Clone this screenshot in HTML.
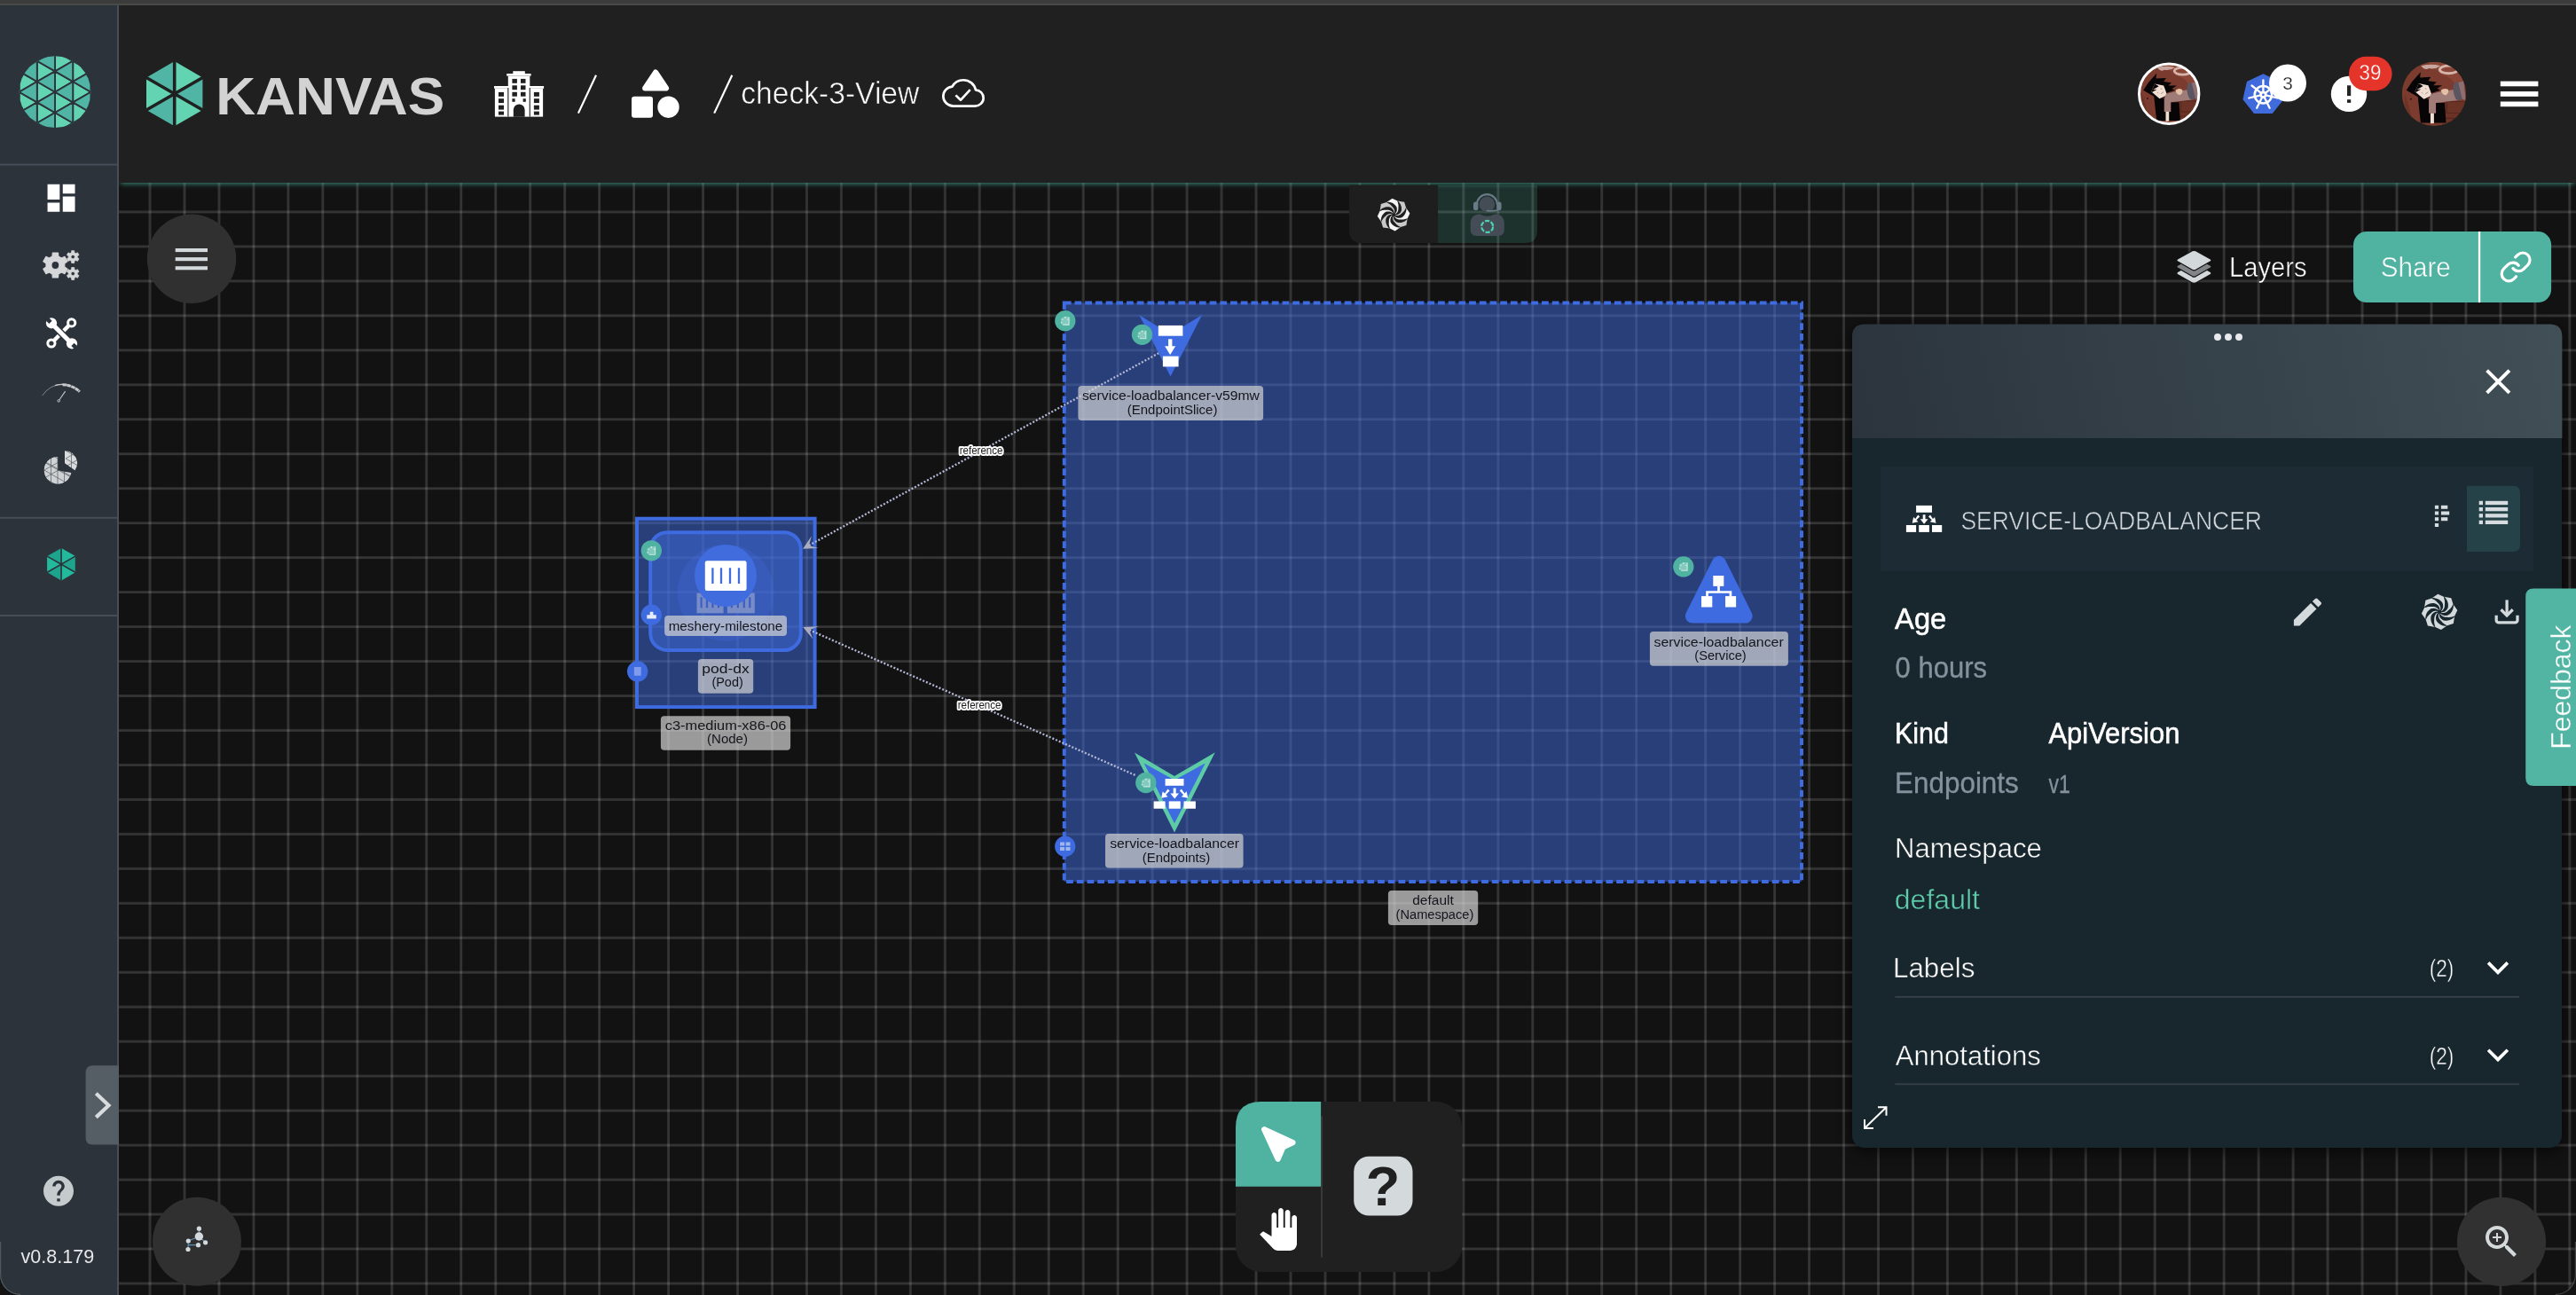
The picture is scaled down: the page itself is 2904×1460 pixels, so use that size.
<!DOCTYPE html>
<html lang="en">
<head>
<meta charset="utf-8">
<title>Kanvas - check-3-View</title>
<style>
*{box-sizing:border-box;margin:0;padding:0}
html,body{width:2904px;height:1460px;overflow:hidden;background:#121212}
body{position:relative;font-family:"Liberation Sans",sans-serif;color:#fff}
.abs{position:absolute}
svg{display:block;overflow:visible;will-change:transform}
#topstrip{left:0;top:0;width:2904px;height:6px;background:linear-gradient(180deg,#3c3c3c 0,#3c3c3c 3.6px,#4a4c4a 4.6px,#474947 6px)}
#grid{left:0;top:0;width:2904px;height:1460px;
 background-image:
  linear-gradient(90deg,rgba(255,255,255,.05) 0,rgba(255,255,255,.148) .75px,rgba(255,255,255,.148) 2.45px,rgba(255,255,255,.05) 3.2px,transparent 3.25px),
  linear-gradient(180deg,rgba(255,255,255,.05) 0,rgba(255,255,255,.148) .75px,rgba(255,255,255,.148) 2.45px,rgba(255,255,255,.05) 3.2px,transparent 3.25px);
 background-size:38.97px 38.97px;
 background-position:167.48px 237.4px;}
#sidebar{left:0;top:6px;width:134px;height:1454px;background:#2c333b;border-right:2px solid #464f58}
#header{left:134px;top:6px;width:2770px;height:199.5px;background:#202020;box-shadow:0 3px 6px -2px rgba(75,175,155,.8)}
.t{position:absolute;white-space:nowrap;line-height:1}
.sx{display:inline-block;transform-origin:0 50%}
</style>
</head>
<body>
<div id="grid" class="abs"></div>
<svg id="cy" class="abs" style="left:0;top:0" width="2904" height="1460" viewBox="0 0 2904 1460" font-family="Liberation Sans, sans-serif">
<defs>
 <g id="bdg"><circle r="11.650" fill="#50b2a1"/><path d="M-4.700,-2.600 L-0.200,-4.900 L4.600,-4.800 L4.600,4.700 L-3,4.700 L-5,2.200 Z" fill="#fff" opacity=".3"/><path d="M4.300,-4.300 V4.400 H-2.600" fill="none" stroke="#fff" stroke-width="1.100" opacity=".6"/><g fill="#fff" opacity=".6"><circle cx="0" cy="-3.800" r=".9"/><circle cx="-2.900" cy="-1.500" r=".8"/><circle cx="-4.100" cy="2.200" r=".8"/><circle cx="3" cy="-1.600" r=".8"/></g></g>
</defs>
<!-- namespace compound -->
<rect x="1199.8" y="341.4" width="831.2" height="652.6" fill="rgba(63,107,224,.5)" stroke="#3f6be0" stroke-width="4" stroke-dasharray="7.8 3.9"/>
<!-- node compound -->
<rect x="718" y="584.7" width="200.6" height="212.4" fill="rgba(63,107,224,.5)" stroke="#3f6be0" stroke-width="4"/>
<!-- pod compound -->
<rect x="733.2" y="600.2" width="169.6" height="132.8" rx="19" fill="rgba(63,107,224,.5)" stroke="#3f6be0" stroke-width="4"/>
<circle cx="818.200" cy="668.300" r="54.400" fill="rgba(75,120,240,.2)"/>
<!-- faint container ghosts -->
<g fill="#788cc8"><rect x="785.500" y="668.600" width="30.100" height="22.700"/><rect x="819.800" y="668.600" width="31" height="22.700"/></g>
<path d="M790.600,673.200v12.100M797,673.200v12.100M803.400,673.200v12.100M810,673.200v12.100M824.900,673.200v12.100M831.800,673.200v12.100M838.800,673.200v12.100M845.300,673.200v12.100" stroke="#3d5fbf" stroke-width="2.200" fill="none"/>
<circle cx="818" cy="648.900" r="35" fill="#406cde"/>
<rect x="794.800" y="632.300" width="46.800" height="33.700" rx="2.200" fill="#fff"/>
<path d="M803.400,640.300v17.600M813,640.300v17.600M823,640.300v17.600M833,640.300v17.600" stroke="#406cde" stroke-width="2.300"/>
<!-- edges -->
<g fill="none" stroke="#b3b8d6" stroke-width="2.300" stroke-dasharray="2 2">
 <path d="M911.9,614.9 L1306.5,398"/>
 <path d="M912.4,710.2 L1281.4,874.7"/>
</g>
<polygon points="905.1,618.7 922.5,618.0 911.9,614.9 915.0,604.3" fill="#aaacc0"/>
<polygon points="905.3,707.0 916.4,720.5 912.4,710.2 922.7,706.2" fill="#aaacc0"/>
<!-- EndpointSlice node -->
<polygon points="1284.200,355.100 1319.500,377 1355.100,355.100 1319.500,424.600" fill="#3f6be0"/>
<rect x="1305.800" y="366.900" width="27.600" height="11.800" fill="#fff"/>
<path d="M1317.100,382.200h4.300v8h3.800l-6.050,9.700l-6.050,-9.700h4z" fill="#fff"/>
<rect x="1310.900" y="401.600" width="17.700" height="11.800" fill="#fff"/>
<!-- Endpoints node (selected) -->
<polygon points="1279,848.500 1323.900,874.900 1369.800,848.300 1324,938.400" fill="#5ccba6"/>
<polygon points="1289.700,860.600 1324,879.500 1358.700,860.600 1324,928.200" fill="#3f6be0"/>
<g fill="#fff">
 <rect x="1313.6" y="878" width="20.900" height="7.800"/>
 <rect x="1300.6" y="903.400" width="13" height="8.300"/><rect x="1317.7" y="903.400" width="13.100" height="8.300"/><rect x="1334.5" y="903.400" width="13.400" height="8.300"/>
 <path d="M1322.700,888.500h3v6h3.300l-4.800,6l-4.800,-6h3.300z"/>
 <path d="M1316.500,889.500l2.100,2.100l-4.300,4.300l2.300,2.300l-7.400,1.500l1.500,-7.400l2.300,2.300z"/>
 <path d="M1331.900,889.500l-2.100,2.100l4.300,4.300l-2.300,2.300l7.400,1.500l-1.500,-7.400l-2.300,2.300z"/>
</g>
<!-- Service node -->
<polygon points="1937.800,634.800 1967.600,694.500 1907.900,694.500" fill="#3f6be0" stroke="#3f6be0" stroke-width="16" stroke-linejoin="round"/>
<g fill="#fff"><rect x="1931.300" y="649" width="12" height="11.900"/><rect x="1918" y="672.100" width="12.300" height="12.400"/><rect x="1945" y="672.100" width="12.100" height="12.400"/></g>
<path d="M1937.500,660.900V667.500M1924.500,672.500V667.500H1950.900V672.500" fill="none" stroke="#fff" stroke-width="2.700"/>
<!-- badges -->
<use href="#bdg" x="1200.8" y="361.7"/>
<use href="#bdg" x="1287.5" y="377.3"/>
<use href="#bdg" x="1897.8" y="638.9"/>
<use href="#bdg" x="1291.8" y="882.5"/>
<use href="#bdg" x="734.3" y="620.8"/>
<circle cx="734.3" cy="693.2" r="11.600" fill="#3f6be0"/>
<path d="M729.300,697.500h10.500v-4.200h-3.400v-3.600h-3.700v3.600h-3.400z" fill="#e8edfb"/>
<circle cx="718.7" cy="757" r="11.700" fill="#3f6be0"/>
<rect x="714.900" y="752" width="7.800" height="9.800" fill="#7f9bea"/>
<circle cx="1200.7" cy="954.2" r="11.600" fill="#3f6be0"/>
<path d="M1195,949.600h5v4h-5zM1201.500,949.600h5v4h-5zM1195,955h5v4h-5zM1201.500,955h5v4h-5z" fill="#9fb5f0"/>
<!-- labels -->
<g fill="rgba(215,215,215,.695)">
 <rect x="1215.4" y="434.9" width="208.7" height="39" rx="4"/>
 <rect x="1859.9" y="711.9" width="156" height="38.900" rx="4"/>
 <rect x="1246" y="940.1" width="155.600" height="38.300" rx="4"/>
 <rect x="749.1" y="694" width="137.900" height="23.100" rx="4"/>
 <rect x="786.9" y="743" width="62.300" height="38.800" rx="4"/>
 <rect x="744.9" y="807.3" width="146.200" height="38.400" rx="4"/>
 <rect x="1564.9" y="1003.9" width="101.300" height="39" rx="4"/>
</g>
<g fill="#15151c" font-size="14" lengthAdjust="spacingAndGlyphs">
 <text x="1220" y="451.2" textLength="199.900" lengthAdjust="spacingAndGlyphs">service-loadbalancer-v59mw</text>
 <text x="1270.8" y="466.6" textLength="101.600" lengthAdjust="spacingAndGlyphs">(EndpointSlice)</text>
 <text x="1864.5" y="728.5" textLength="146.200" lengthAdjust="spacingAndGlyphs">service-loadbalancer</text>
 <text x="1910.3" y="743.8" textLength="58.400" lengthAdjust="spacingAndGlyphs">(Service)</text>
 <text x="1251.2" y="956.2" textLength="145.800" lengthAdjust="spacingAndGlyphs">service-loadbalancer</text>
 <text x="1287.7" y="971.6" textLength="76.500" lengthAdjust="spacingAndGlyphs">(Endpoints)</text>
 <text x="753.7" y="710.6" textLength="128.600" lengthAdjust="spacingAndGlyphs">meshery-milestone</text>
 <text x="791.3" y="759.3" textLength="53.500" lengthAdjust="spacingAndGlyphs">pod-dx</text>
 <text x="802.4" y="774.3" textLength="35.400" lengthAdjust="spacingAndGlyphs">(Pod)</text>
 <text x="749.8" y="823" textLength="136.700" lengthAdjust="spacingAndGlyphs">c3-medium-x86-06</text>
 <text x="797" y="838" textLength="46" lengthAdjust="spacingAndGlyphs">(Node)</text>
 <text x="1592.2" y="1020.4" textLength="46.600" lengthAdjust="spacingAndGlyphs">default</text>
 <text x="1573.6" y="1035.7" textLength="87.700" lengthAdjust="spacingAndGlyphs">(Namespace)</text>
</g>
<g font-size="12.600" fill="#1a1a1a" stroke="#fff" stroke-width="4" stroke-linejoin="round" paint-order="stroke" text-anchor="middle">
 <text x="1106.100" y="511.600" textLength="48.900" lengthAdjust="spacingAndGlyphs">reference</text>
 <text x="1104.100" y="799.100" textLength="48.900" lengthAdjust="spacingAndGlyphs">reference</text>
</g>
</svg>
<div id="header" class="abs"></div>
<svg class="abs" style="left:0;top:0" width="2904" height="206" viewBox="0 0 2904 206" font-family="Liberation Sans, sans-serif">
<defs>
 <clipPath id="avc"><circle cx="50" cy="50" r="50"/></clipPath>
 <g id="avatar" clip-path="url(#avc)">
  <rect width="100" height="100" fill="#7b3c2f"/>
  <path d="M62,20 Q80,24 84,38 L100,40 L100,0 L40,0 Z" fill="#8a4636"/>
  <path d="M30,6 Q45,2 60,6 Q52,12 42,10 Q36,14 30,6Z" fill="#c9a7a0"/>
  <ellipse cx="73" cy="12" rx="14" ry="6" fill="none" stroke="#d6b4ac" stroke-width="4"/>
  <path d="M64,62 H100 V100 H66 Z" fill="#6b3226"/>
  <path d="M64,62 H100 M70,62 V80 M70,80 H100 M66,88 H100" stroke="#57271d" stroke-width="1.500" fill="none"/>
  <path d="M4,50 Q10,62 18,100 H4 Z" fill="#6d3327"/>
  <circle cx="14" cy="58" r="1.600" fill="#3a1812"/>
  <path d="M6.900,44.300 L15.300,31.500 L29.200,15.800 L28.200,24.600 L45,23.600 L41,29.600 L54,31.500 L49,36.500 L62.900,36.500 L55,41.400 L59.900,44.300 L47,48.300 L47,52 L36,60 L24.300,54.200 Z" fill="#070506"/>
  <path d="M24.300,49.300 L29.200,95 L68.800,95 L66.800,64 L53,64 L53,80 L42,80 L42,58 L34,58 Z" fill="#070506"/>
  <path d="M26.200,33.500 L41.100,36.500 L47,52.200 L34.200,58.100 L20.300,46.300 Z" fill="#f1ded3"/>
  <path d="M20.300,46.300 L26.200,33.500 L33,37.500 L23,43.500 L30,42.500 L21.500,47.300 Z" fill="#070506"/>
  <path d="M36,41.500 l2.500,.6 M30.500,47.500 l1.800,1.800 M36.500,50 l4.500,-3" stroke="#8a7a78" stroke-width="1" fill="none"/>
  <path d="M42,60 L45,50 L62,46 L84,43 L88,60 L53,64 L53,80 L42,80 Z" fill="#a07c79"/>
  <path d="M61,44 Q66,40 72,43 Q74,48 69,52 Q62,52 61,44Z" fill="#e2bfa5"/>
  <path d="M81,34 Q86,30 90,32 L94,58 Q88,62 84,58 Q78,46 81,34Z" fill="#5a5560"/>
  <path d="M88,32 L96,30 L100,60 L94,58 Z" fill="#8d6f70"/>
  <rect x="44.500" y="80" width="5.500" height="16" fill="#f1ded3"/>
 </g>
</defs>
<!-- kanvas hex logo -->
<g transform="translate(196.700,105.700)">
 <path d="M0,0L0,-36.600L31.700,-18.300ZM0,0L31.700,18.300L0,36.600ZM0,0L-31.700,18.300L-31.700,-18.300Z" fill="#62d4b2"/>
 <path d="M0,0L31.700,-18.300L31.700,18.300ZM0,0L0,36.600L-31.700,18.300ZM0,0L-31.700,-18.300L0,-36.600Z" fill="#50b5a4"/>
 <path d="M0,-38V38M-33,-19L33,19M-33,19L33,-19" stroke="#202020" stroke-width="3.600"/>
</g>
<text x="243.200" y="129.300" font-size="59" font-weight="700" fill="#d3d3d3" textLength="258" lengthAdjust="spacingAndGlyphs">KANVAS</text>
<!-- building icon -->
<g fill="#fff">
 <rect x="578.300" y="80.200" width="13.500" height="2.800"/>
 <rect x="571.200" y="83" width="27.400" height="2.600"/>
 <rect x="572.800" y="85.600" width="24.500" height="46"/>
 <rect x="557" y="97" width="16.400" height="2.800"/>
 <rect x="557.900" y="99.800" width="15" height="31.800"/>
 <rect x="596.700" y="97" width="16.400" height="2.800"/>
 <rect x="597.200" y="99.800" width="14.900" height="31.800"/>
</g>
<g fill="#202020">
 <rect x="577.400" y="88.900" width="5.500" height="4.900"/><rect x="587" y="88.900" width="5.500" height="4.900"/>
 <rect x="577.400" y="96.300" width="5.500" height="4.900"/><rect x="587" y="96.300" width="5.500" height="4.900"/>
 <rect x="577.400" y="103.800" width="5.500" height="4.900"/><rect x="587" y="103.800" width="5.500" height="4.900"/>
 <rect x="577.400" y="111.200" width="3.200" height="3.600"/><rect x="589.600" y="111.200" width="3.200" height="3.600"/>
 <path d="M578.800,131.700 V123.800 A6.400,6.400 0 0 1 591.600,123.800 V131.700 Z"/>
 <rect x="562" y="103.900" width="6" height="4.900"/><rect x="562" y="111.200" width="6" height="4.900"/><rect x="562" y="118.700" width="6" height="4.900"/><rect x="562" y="125.600" width="6" height="4"/>
 <rect x="601.900" y="103.900" width="6" height="4.900"/><rect x="601.900" y="111.200" width="6" height="4.900"/><rect x="601.900" y="118.700" width="6" height="4.900"/><rect x="601.900" y="125.600" width="6" height="4"/>
 <rect x="572.300" y="99" width="1.100" height="32.600"/><rect x="596.700" y="99" width="1.100" height="32.600"/>
</g>
<path d="M651.900,127.600 L672,84.800 M805.200,127.600 L825.300,84.800" stroke="#fff" stroke-width="2.200" fill="none"/>
<!-- shapes icon -->
<g fill="#fff" stroke="#fff" stroke-linejoin="round">
 <path d="M739.100,81.500 L751.100,99.500 L727.100,99.500 Z" stroke-width="6"/>
 <rect x="715" y="111.800" width="18" height="18" stroke-width="6"/>
 <circle cx="753.500" cy="120.700" r="12.200" stroke="none"/>
</g>
<text x="835.300" y="116.900" font-size="34.700" fill="#fff" stroke="#202020" stroke-width=".55" textLength="201" lengthAdjust="spacingAndGlyphs">check-3-View</text>
<!-- cloud done -->
<g fill="none" stroke="#fff" stroke-width="2.700" stroke-linejoin="round">
 <path transform="translate(1062,80.900) scale(2) translate(12,12) scale(.944,.916) translate(-12,-12)" vector-effect="non-scaling-stroke" d="M19.350 10.040C18.670 6.590 15.640 4 12 4 9.110 4 6.600 5.640 5.350 8.040 2.340 8.360 0 10.910 0 14c0 3.310 2.690 6 6 6h13c2.760 0 5-2.240 5-5 0-2.640-2.050-4.780-4.650-4.960z"/>
 <path d="M1077.400,107.400 L1082.900,112.800 L1093.700,101.100"/>
</g>
<!-- avatar 1 -->
<use href="#avatar" transform="translate(2411.500,72) scale(.674)"/>
<circle cx="2445.200" cy="105.700" r="33.700" fill="none" stroke="#fff" stroke-width="3"/>
<!-- k8s -->
<g transform="translate(2551.400,106.800)">
 <polygon points="0,-22.400 17.500,-14 21.800,5 9.700,20.200 -9.700,20.200 -21.800,5 -17.500,-14" fill="#3f6bdc" stroke="#3f6bdc" stroke-width="2.200" stroke-linejoin="round"/>
 <g stroke="#fff" fill="none" stroke-linecap="round">
  <circle r="9.700" stroke-width="2.500"/>
  <path d="M0,-16.500V-4M12.900,-10.300L3.100,-2.500M16.100,3.700L3.900,.9M7.200,14.900L1.700,3.600M-7.200,14.900L-1.700,3.600M-16.100,3.700L-3.900,.9M-12.900,-10.300L-3.100,-2.500" stroke-width="2.300"/>
 </g>
 <circle r="4.200" fill="#fff"/><circle r="1.400" fill="#3f6bdc"/>
</g>
<circle cx="2579" cy="93.500" r="21" fill="#fff"/>
<text x="2579" y="101.100" font-size="20.800" fill="#1a1a1a" stroke="#fff" stroke-width=".25" text-anchor="middle">3</text>
<!-- alerts -->
<circle cx="2648" cy="105.900" r="20.200" fill="#fff"/>
<rect x="2646" y="96.300" width="4.200" height="11.800" fill="#252525"/><rect x="2646" y="112.200" width="4.200" height="3.700" fill="#252525"/>
<rect x="2648" y="63.800" width="48.600" height="38.500" rx="19.250" fill="#e5342a"/>
<text x="2672" y="90" font-size="23" fill="#fff" stroke="#e5342a" stroke-width=".3" text-anchor="middle" textLength="24.800" lengthAdjust="spacingAndGlyphs">39</text>
<!-- avatar 2 -->
<use href="#avatar" transform="translate(2707.800,69.800) scale(.722)"/>
<!-- hamburger -->
<g fill="#fff"><rect x="2818.800" y="91.600" width="42.600" height="5.700"/><rect x="2818.800" y="103.100" width="42.600" height="5.700"/><rect x="2818.800" y="114.500" width="42.600" height="5.700"/></g>
</svg>
<div id="sidebar" class="abs"></div>
<div id="topstrip" class="abs"></div>
<svg class="abs" style="left:0;top:0" width="134" height="1460" viewBox="0 0 134 1460" font-family="Liberation Sans, sans-serif">
<defs><clipPath id="mclip"><circle cx="0" cy="0" r="40.4"/></clipPath></defs>
<!-- meshery logo -->
<g transform="translate(62,103.700)" clip-path="url(#mclip)">
 <rect x="-45" y="-45" width="90" height="90" fill="#2c333b"/>
 <path d="M-60.6,-11.7 -60.6,11.7 -40.4,0.0zM-40.4,-46.6 -40.4,-23.3 -20.2,-35.0zM-40.4,-23.3 -40.4,0.0 -20.2,-11.7zM-40.4,0.0 -40.4,23.3 -20.2,11.7zM-40.4,23.3 -40.4,46.6 -20.2,35.0zM-20.2,-58.3 -20.2,-35.0 0.0,-46.6zM-20.2,-35.0 -20.2,-11.7 0.0,-23.3zM-20.2,-11.7 -20.2,11.7 0.0,0.0zM-20.2,11.7 -20.2,35.0 0.0,23.3zM-20.2,35.0 -20.2,58.3 0.0,46.6zM0.0,-46.6 0.0,-23.3 20.2,-35.0zM0.0,-23.3 0.0,0.0 20.2,-11.7zM0.0,0.0 0.0,23.3 20.2,11.7zM0.0,23.3 0.0,46.6 20.2,35.0zM20.2,-58.3 20.2,-35.0 40.4,-46.6zM20.2,-35.0 20.2,-11.7 40.4,-23.3zM20.2,-11.7 20.2,11.7 40.4,0.0zM20.2,11.7 20.2,35.0 40.4,23.3zM20.2,35.0 20.2,58.3 40.4,46.6zM40.4,-23.3 40.4,0.0 60.6,-11.7zM40.4,0.0 40.4,23.3 60.6,11.7z" fill="#62d4b2" stroke="#2c333b" stroke-width="1.9" stroke-linejoin="miter"/>
 <path d="M-40.4,-23.3 -40.4,0.0 -60.6,-11.7zM-40.4,0.0 -40.4,23.3 -60.6,11.7zM-20.2,-58.3 -20.2,-35.0 -40.4,-46.6zM-20.2,-35.0 -20.2,-11.7 -40.4,-23.3zM-20.2,-11.7 -20.2,11.7 -40.4,0.0zM-20.2,11.7 -20.2,35.0 -40.4,23.3zM-20.2,35.0 -20.2,58.3 -40.4,46.6zM0.0,-46.6 0.0,-23.3 -20.2,-35.0zM0.0,-23.3 0.0,0.0 -20.2,-11.7zM0.0,0.0 0.0,23.3 -20.2,11.7zM0.0,23.3 0.0,46.6 -20.2,35.0zM20.2,-58.3 20.2,-35.0 0.0,-46.6zM20.2,-35.0 20.2,-11.7 0.0,-23.3zM20.2,-11.7 20.2,11.7 0.0,0.0zM20.2,11.7 20.2,35.0 0.0,23.3zM20.2,35.0 20.2,58.3 0.0,46.6zM40.4,-46.6 40.4,-23.3 20.2,-35.0zM40.4,-23.3 40.4,0.0 20.2,-11.7zM40.4,0.0 40.4,23.3 20.2,11.7zM40.4,23.3 40.4,46.6 20.2,35.0zM60.6,-11.7 60.6,11.7 40.4,0.0z" fill="#50b5a4" stroke="#2c333b" stroke-width="1.9" stroke-linejoin="miter"/>
</g>
<!-- dividers -->
<rect x="0" y="184.600" width="132" height="2" fill="#454d56"/>
<rect x="0" y="582.800" width="132" height="2" fill="#454d56"/>
<rect x="0" y="693" width="132" height="2" fill="#454d56"/>
<!-- dashboard -->
<path transform="translate(48.400,202.700) scale(1.720)" d="M3 13h8V3H3v10zm0 8h8v-6H3v6zm10 0h8V11h-8v10zm0-18v6h8V3h-8z" fill="#fff"/>
<!-- gears -->
<g fill="#d5d7d9" fill-rule="evenodd" stroke="#d5d7d9" stroke-width="1.200" stroke-linejoin="round">
 <path transform="translate(62.400,299)" d="M3.4,10.0 L3.1,13.9 L-3.1,13.9 L-3.4,10.0 L-7.0,8.0 L-10.5,9.6 L-13.6,4.2 L-10.4,2.1 L-10.4,-2.1 L-13.6,-4.2 L-10.5,-9.6 L-7.0,-8.0 L-3.4,-10.0 L-3.1,-13.9 L3.1,-13.9 L3.4,-10.0 L7.0,-8.0 L10.5,-9.6 L13.6,-4.2 L10.4,-2.1 L10.4,2.1 L13.6,4.2 L10.5,9.6 L7.0,8.0Z M4.5,0 A4.5,4.5 0 1,0 -4.5,0 A4.5,4.5 0 1,0 4.5,0Z"/>
 <path transform="translate(82.200,289.600)" d="M1.6,4.8 L1.5,6.9 L-1.5,6.9 L-1.6,4.8 L-3.4,3.8 L-5.2,4.8 L-6.8,2.1 L-5.0,1.0 L-5.0,-1.0 L-6.8,-2.1 L-5.2,-4.8 L-3.4,-3.8 L-1.6,-4.8 L-1.5,-6.9 L1.5,-6.9 L1.6,-4.8 L3.4,-3.8 L5.2,-4.8 L6.8,-2.1 L5.0,-1.0 L5.0,1.0 L6.8,2.1 L5.2,4.8 L3.4,3.8Z M2.2,0 A2.2,2.2 0 1,0 -2.2,0 A2.2,2.2 0 1,0 2.2,0Z" stroke-width=".8"/>
 <path transform="translate(82.200,308.500)" d="M1.6,4.8 L1.5,6.9 L-1.5,6.9 L-1.6,4.8 L-3.4,3.8 L-5.2,4.8 L-6.8,2.1 L-5.0,1.0 L-5.0,-1.0 L-6.8,-2.1 L-5.2,-4.8 L-3.4,-3.8 L-1.6,-4.8 L-1.5,-6.9 L1.5,-6.9 L1.6,-4.8 L3.4,-3.8 L5.2,-4.8 L6.8,-2.1 L5.0,-1.0 L5.0,1.0 L6.8,2.1 L5.2,4.8 L3.4,3.8Z M2.2,0 A2.2,2.2 0 1,0 -2.2,0 A2.2,2.2 0 1,0 2.2,0Z" stroke-width=".8"/>
</g>
<!-- tools -->
<g>
 <path d="M57.900,387 L80.700,363.900" stroke="#fff" stroke-width="4.400" stroke-linecap="round"/>
 <circle cx="80.700" cy="363.900" r="4.100" fill="#2c333b" stroke="#fff" stroke-width="3"/>
 <circle cx="57.900" cy="387" r="4.100" fill="#2c333b" stroke="#fff" stroke-width="3"/>
 <path d="M59,365.500 L80,386.500" stroke="#2c333b" stroke-width="8"/>
 <path d="M58.500,365 L80.500,387" stroke="#fff" stroke-width="5.200"/>
 <circle cx="58" cy="364.300" r="6.100" fill="#fff"/><circle cx="81" cy="387.300" r="6.100" fill="#fff"/>
 <path d="M57,363.300 L50,356.300" stroke="#2c333b" stroke-width="4.600"/>
 <path d="M82,388.300 L89,395.300" stroke="#2c333b" stroke-width="4.600"/>
</g>
<!-- gauge -->
<g fill="none" stroke="#c8cacc">
 <path d="M47.800,445.900 A28.500,28.500 0 0 1 70.500,433.200" stroke-width=".8" opacity=".7"/>
 <path d="M62,434.600 A28.500,28.500 0 0 1 76,433.900" stroke-width="1.400"/>
 <path d="M70.500,433.700 A28,28 0 0 1 89.800,441.600" stroke-width="3" stroke-dasharray="4.500 .5"/>
 <path d="M66.900,450.700 L73.600,441.100" stroke-width="1.100"/>
 <circle cx="66.200" cy="451.900" r="1.300" stroke-width=".9"/>
</g>
<!-- pie -->
<g>
 <path d="M65.100,530.300 L65.100,514.900 A15.400,15.400 0 1 0 80.300,533 Z" fill="#cfd2d4"/>
 <circle cx="74" cy="522" r="9.500" fill="#2c333b"/>
 <path d="M65.100,530.300 L65.100,514.900 A15.400,15.400 0 0 0 49.700,530.300 Z" fill="#cfd2d4"/>
 <path d="M73,522.200 L73,508.200 A14,14 0 0 1 84.500,530.200 Z" fill="#d9dbdd"/>
 <g stroke="#2c333b" stroke-width=".7" opacity=".75"><path d="M57.500,512v36M65,512v36M72.500,528v20M80.500,505v26M48,520l32,18M48,529l28,16M48,538l18,10M60,514l8,4.500M82,538l-34,-19M66,548l14,-8M48,540l18,-10M48,531l18,-10M74,517l16,-9M74,526l16,-9M74,508l16,9M74,517l14,8"/></g>
</g>
<!-- kanvas hex -->
<g transform="translate(69,636.200)">
 <polygon points="0,-18.200 15.800,-9.100 15.800,9.100 0,18.200 -15.800,9.100 -15.800,-9.100" fill="#1ca58c"/>
 <path d="M0,0L0,-18.200L15.800,-9.100ZM0,0L15.800,9.100L0,18.200ZM0,0L-15.800,9.100L-15.800,-9.100Z" fill="#22b99d"/>
 <path d="M0,-18.200V18.200M-15.800,-9.100L15.800,9.100M-15.800,9.100L15.800,-9.100" stroke="#2c333b" stroke-width="1.600"/>
</g>
<!-- expand tab -->
<path d="M134,1201.200 H104.600 Q96.600,1201.200 96.600,1209.200 V1282.400 Q96.600,1290.400 104.600,1290.400 H134 Z" fill="#555d65"/>
<path d="M108.300,1232.800 L122.500,1246.200 L108.300,1259.600" fill="none" stroke="#d9dcde" stroke-width="4.200"/>
<!-- help -->
<path transform="translate(45.600,1322.300) scale(1.700)" d="M12 2C6.480 2 2 6.480 2 12s4.480 10 10 10 10-4.480 10-10S17.520 2 12 2zm1 17h-2v-2h2v2zm2.070-7.750l-.9.920C13.450 12.900 13 13.500 13 15h-2v-.5c0-1.100.450-2.100 1.170-2.830l1.240-1.260c.370-.360.590-.860.590-1.410 0-1.100-.9-2-2-2s-2 .9-2 2H8c0-2.210 1.790-4 4-4s4 1.790 4 4c0 .880-.360 1.680-.930 2.250z" fill="#c5cacd"/>
<text x="23.600" y="1424" font-size="22.800" fill="#e6e8ea" textLength="82.500" lengthAdjust="spacingAndGlyphs">v0.8.179</text>
</svg>
<svg class="abs" style="left:0;top:0" width="2904" height="1460" viewBox="0 0 2904 1460" font-family="Liberation Sans, sans-serif">
<!-- left hamburger fab -->
<circle cx="216" cy="291.800" r="50.200" fill="#303030"/>
<g fill="#d4d9dc"><rect x="197.700" y="280" width="36.300" height="4.100"/><rect x="197.700" y="290.100" width="36.300" height="4.100"/><rect x="197.700" y="300.200" width="36.300" height="4.100"/></g>
<!-- top toolbar -->
<path d="M1521,208.800 H1621 V274 H1535 Q1521,274 1521,260 Z" fill="#1e1e1e"/>
<path d="M1621,208.800 H1733 V260 Q1733,274 1719,274 H1621 Z" fill="rgba(80,190,170,.185)"/>
<!--SP1-->
<polygon points="1571.1,242.1 1571.7,241.3 1572.3,240.5 1572.7,239.5 1572.9,238.5 1573.0,237.4 1572.9,236.3 1572.6,235.2 1572.2,234.2 1571.6,233.1 1570.8,232.1 1569.9,231.1 1568.8,230.3 1567.6,229.5 1566.3,228.9 1564.8,228.5 1563.2,228.1 1569.5,223.8 1575.4,226.6 1576.3,228.0 1577.0,229.4 1577.5,230.7 1577.9,232.1 1578.0,233.5 1578.0,234.8 1577.8,236.1 1577.5,237.2 1577.0,238.3 1576.4,239.3 1575.7,240.1 1574.9,240.8 1574.0,241.4 1573.1,241.8 1572.1,242.0 1571.1,242.1" fill="#f4f4f4"/>
<polygon points="1571.1,242.1 1572.1,242.0 1573.1,241.8 1574.0,241.4 1574.9,240.8 1575.7,240.1 1576.4,239.3 1577.0,238.3 1577.5,237.2 1577.8,236.1 1578.0,234.8 1578.0,233.5 1577.9,232.1 1577.5,230.7 1577.0,229.4 1576.3,228.0 1575.4,226.6 1583.1,227.8 1585.1,234.2 1584.7,235.8 1584.3,237.3 1583.7,238.6 1582.9,239.8 1582.1,240.9 1581.1,241.8 1580.1,242.6 1579.0,243.2 1578.0,243.6 1576.9,243.9 1575.8,244.0 1574.7,243.9 1573.7,243.7 1572.7,243.3 1571.9,242.7 1571.1,242.1" fill="#c9c9c9"/>
<polygon points="1571.1,242.1 1571.9,242.7 1572.7,243.3 1573.7,243.7 1574.7,243.9 1575.8,244.0 1576.9,243.9 1578.0,243.6 1579.0,243.2 1580.1,242.6 1581.1,241.8 1582.1,240.9 1582.9,239.8 1583.7,238.6 1584.3,237.3 1584.7,235.8 1585.1,234.2 1589.4,240.5 1586.6,246.4 1585.2,247.3 1583.8,248.0 1582.5,248.5 1581.1,248.9 1579.7,249.0 1578.4,249.0 1577.1,248.8 1576.0,248.5 1574.9,248.0 1573.9,247.4 1573.1,246.7 1572.4,245.9 1571.8,245.0 1571.4,244.1 1571.2,243.1 1571.1,242.1" fill="#f4f4f4"/>
<polygon points="1571.1,242.1 1571.2,243.1 1571.4,244.1 1571.8,245.0 1572.4,245.9 1573.1,246.7 1573.9,247.4 1574.9,248.0 1576.0,248.5 1577.1,248.8 1578.4,249.0 1579.7,249.0 1581.1,248.9 1582.5,248.5 1583.8,248.0 1585.2,247.3 1586.6,246.4 1585.4,254.1 1579.0,256.1 1577.4,255.7 1575.9,255.3 1574.6,254.7 1573.4,253.9 1572.3,253.1 1571.4,252.1 1570.6,251.1 1570.0,250.0 1569.6,249.0 1569.3,247.9 1569.2,246.8 1569.3,245.7 1569.5,244.7 1569.9,243.7 1570.5,242.9 1571.1,242.1" fill="#c9c9c9"/>
<polygon points="1571.1,242.1 1570.5,242.9 1569.9,243.7 1569.5,244.7 1569.3,245.7 1569.2,246.8 1569.3,247.9 1569.6,249.0 1570.0,250.0 1570.6,251.1 1571.4,252.1 1572.3,253.1 1573.4,253.9 1574.6,254.7 1575.9,255.3 1577.4,255.7 1579.0,256.1 1572.7,260.4 1566.8,257.6 1565.9,256.2 1565.2,254.8 1564.7,253.5 1564.3,252.1 1564.2,250.7 1564.2,249.4 1564.4,248.1 1564.7,247.0 1565.2,245.9 1565.8,244.9 1566.5,244.1 1567.3,243.4 1568.2,242.8 1569.1,242.4 1570.1,242.2 1571.1,242.1" fill="#f4f4f4"/>
<polygon points="1571.1,242.1 1570.1,242.2 1569.1,242.4 1568.2,242.8 1567.3,243.4 1566.5,244.1 1565.8,244.9 1565.2,245.9 1564.7,247.0 1564.4,248.1 1564.2,249.4 1564.2,250.7 1564.3,252.1 1564.7,253.5 1565.2,254.8 1565.9,256.2 1566.8,257.6 1559.1,256.4 1557.1,250.0 1557.5,248.4 1557.9,246.9 1558.5,245.6 1559.3,244.4 1560.1,243.3 1561.1,242.4 1562.1,241.6 1563.2,241.0 1564.2,240.6 1565.3,240.3 1566.4,240.2 1567.5,240.3 1568.5,240.5 1569.5,240.9 1570.3,241.5 1571.1,242.1" fill="#c9c9c9"/>
<polygon points="1571.1,242.1 1570.3,241.5 1569.5,240.9 1568.5,240.5 1567.5,240.3 1566.4,240.2 1565.3,240.3 1564.2,240.6 1563.2,241.0 1562.1,241.6 1561.1,242.4 1560.1,243.3 1559.3,244.4 1558.5,245.6 1557.9,246.9 1557.5,248.4 1557.1,250.0 1552.8,243.7 1555.6,237.8 1557.0,236.9 1558.4,236.2 1559.7,235.7 1561.1,235.3 1562.5,235.2 1563.8,235.2 1565.1,235.4 1566.2,235.7 1567.3,236.2 1568.3,236.8 1569.1,237.5 1569.8,238.3 1570.4,239.2 1570.8,240.1 1571.0,241.1 1571.1,242.1" fill="#f4f4f4"/>
<polygon points="1571.1,242.1 1571.0,241.1 1570.8,240.1 1570.4,239.2 1569.8,238.3 1569.1,237.5 1568.3,236.8 1567.3,236.2 1566.2,235.7 1565.1,235.4 1563.8,235.2 1562.5,235.2 1561.1,235.3 1559.7,235.7 1558.4,236.2 1557.0,236.9 1555.6,237.8 1556.8,230.1 1563.2,228.1 1564.8,228.5 1566.3,228.9 1567.6,229.5 1568.8,230.3 1569.9,231.1 1570.8,232.1 1571.6,233.1 1572.2,234.2 1572.6,235.2 1572.9,236.3 1573.0,237.4 1572.9,238.5 1572.7,239.5 1572.3,240.5 1571.7,241.3 1571.1,242.1" fill="#c9c9c9"/>
<path d="M1572.3,241.8 1573.1,241.4 1573.8,240.9 1574.4,240.3 1575.0,239.7 1575.5,238.9 1575.9,238.0 1576.2,237.1 1576.4,236.1 1576.4,235.1 1576.4,234.1 1576.5,233.1 1576.5,232.2 1576.5,231.2 1576.3,230.2 1576.1,229.2 1575.8,228.2 1575.5,227.2 1575.5,226.3 1575.5,226.3 1577.1,227.8 1578.2,229.2 1579.0,230.7 1579.5,232.2 1579.9,233.7 1580.0,235.1 1580.0,236.5 1579.7,237.8 1579.3,238.8 1578.7,239.7 1578.0,240.4 1577.3,241.1 1576.5,241.6 1575.7,242.0 1574.9,242.3 1574.0,242.5 1573.2,242.5 1572.3,242.4ZM1572.2,242.7 1573.0,243.0 1573.8,243.2 1574.7,243.2 1575.6,243.1 1576.5,242.9 1577.4,242.6 1578.2,242.2 1579.1,241.6 1579.8,240.9 1580.6,240.2 1581.3,239.6 1582.0,238.9 1582.6,238.2 1583.2,237.4 1583.8,236.5 1584.3,235.6 1584.7,234.7 1585.3,234.1 1585.3,234.1 1585.5,236.2 1585.2,238.0 1584.7,239.6 1584.1,241.1 1583.3,242.3 1582.3,243.5 1581.3,244.4 1580.2,245.2 1579.2,245.6 1578.2,245.8 1577.2,245.8 1576.2,245.8 1575.3,245.6 1574.4,245.3 1573.6,244.9 1572.9,244.4 1572.3,243.8 1571.7,243.2ZM1571.4,243.3 1571.8,244.1 1572.3,244.8 1572.9,245.4 1573.5,246.0 1574.3,246.5 1575.2,246.9 1576.1,247.2 1577.1,247.4 1578.1,247.4 1579.1,247.4 1580.1,247.5 1581.0,247.5 1582.0,247.5 1583.0,247.3 1584.0,247.1 1585.0,246.8 1586.0,246.5 1586.9,246.5 1586.9,246.5 1585.4,248.1 1584.0,249.2 1582.5,250.0 1581.0,250.5 1579.5,250.9 1578.1,251.0 1576.7,251.0 1575.4,250.7 1574.4,250.3 1573.5,249.7 1572.8,249.0 1572.1,248.3 1571.6,247.5 1571.2,246.7 1570.9,245.9 1570.7,245.0 1570.7,244.2 1570.8,243.3ZM1570.5,243.2 1570.2,244.0 1570.0,244.8 1570.0,245.7 1570.1,246.6 1570.3,247.5 1570.6,248.4 1571.0,249.2 1571.6,250.1 1572.3,250.8 1573.0,251.6 1573.6,252.3 1574.3,253.0 1575.0,253.6 1575.8,254.2 1576.7,254.8 1577.6,255.3 1578.5,255.7 1579.1,256.3 1579.1,256.3 1577.0,256.5 1575.2,256.2 1573.6,255.7 1572.1,255.1 1570.9,254.3 1569.7,253.3 1568.8,252.3 1568.0,251.2 1567.6,250.2 1567.4,249.2 1567.4,248.2 1567.4,247.2 1567.6,246.3 1567.9,245.4 1568.3,244.6 1568.8,243.9 1569.4,243.3 1570.0,242.7ZM1569.9,242.4 1569.1,242.8 1568.4,243.3 1567.8,243.9 1567.2,244.5 1566.7,245.3 1566.3,246.2 1566.0,247.1 1565.8,248.1 1565.8,249.1 1565.8,250.1 1565.7,251.1 1565.7,252.0 1565.7,253.0 1565.9,254.0 1566.1,255.0 1566.4,256.0 1566.7,257.0 1566.7,257.9 1566.7,257.9 1565.1,256.4 1564.0,255.0 1563.2,253.5 1562.7,252.0 1562.3,250.5 1562.2,249.1 1562.2,247.7 1562.5,246.4 1562.9,245.4 1563.5,244.5 1564.2,243.8 1564.9,243.1 1565.7,242.6 1566.5,242.2 1567.3,241.9 1568.2,241.7 1569.0,241.7 1569.9,241.8ZM1570.0,241.5 1569.2,241.2 1568.4,241.0 1567.5,241.0 1566.6,241.1 1565.7,241.3 1564.8,241.6 1564.0,242.0 1563.1,242.6 1562.4,243.3 1561.6,244.0 1560.9,244.6 1560.2,245.3 1559.6,246.0 1559.0,246.8 1558.4,247.7 1557.9,248.6 1557.5,249.5 1556.9,250.1 1556.9,250.1 1556.7,248.0 1557.0,246.2 1557.5,244.6 1558.1,243.1 1558.9,241.9 1559.9,240.7 1560.9,239.8 1562.0,239.0 1563.0,238.6 1564.0,238.4 1565.0,238.4 1566.0,238.4 1566.9,238.6 1567.8,238.9 1568.6,239.3 1569.3,239.8 1569.9,240.4 1570.5,241.0ZM1570.8,240.9 1570.4,240.1 1569.9,239.4 1569.3,238.8 1568.7,238.2 1567.9,237.7 1567.0,237.3 1566.1,237.0 1565.1,236.8 1564.1,236.8 1563.1,236.8 1562.1,236.7 1561.2,236.7 1560.2,236.7 1559.2,236.9 1558.2,237.1 1557.2,237.4 1556.2,237.7 1555.3,237.7 1555.3,237.7 1556.8,236.1 1558.2,235.0 1559.7,234.2 1561.2,233.7 1562.7,233.3 1564.1,233.2 1565.5,233.2 1566.8,233.5 1567.8,233.9 1568.7,234.5 1569.4,235.2 1570.1,235.9 1570.6,236.7 1571.0,237.5 1571.3,238.3 1571.5,239.2 1571.5,240.0 1571.4,240.9ZM1571.7,241.0 1572.0,240.2 1572.2,239.4 1572.2,238.5 1572.1,237.6 1571.9,236.7 1571.6,235.8 1571.2,235.0 1570.6,234.1 1569.9,233.4 1569.2,232.6 1568.6,231.9 1567.9,231.2 1567.2,230.6 1566.4,230.0 1565.5,229.4 1564.6,228.9 1563.7,228.5 1563.1,227.9 1563.1,227.9 1565.2,227.7 1567.0,228.0 1568.6,228.5 1570.1,229.1 1571.3,229.9 1572.5,230.9 1573.4,231.9 1574.2,233.0 1574.6,234.0 1574.8,235.0 1574.8,236.0 1574.8,237.0 1574.6,237.9 1574.3,238.8 1573.9,239.6 1573.4,240.3 1572.8,240.9 1572.2,241.5Z" fill="#1e1e1e"/>
<rect x="1569.4" y="240.4" width="3.4" height="3.4" fill="#1e1e1e"/>
<!--/SP1-->
<!-- headset person -->
<g>
 <path d="M1665,230.500 A11.400,11.400 0 0 1 1687.800,230.500" fill="none" stroke="#6a7b87" stroke-width="2.200"/>
 <rect x="1661" y="227.500" width="5.400" height="9.600" rx="2.600" fill="#6a7b87"/>
 <rect x="1687.200" y="227.500" width="5.400" height="9.600" rx="2.600" fill="#6a7b87"/>
 <circle cx="1676.400" cy="230.400" r="8.800" fill="#444c55"/>
 <path d="M1689.600,236 Q1688,238.200 1676.500,237.700" fill="none" stroke="#6a7b87" stroke-width="1.800" stroke-linecap="round"/>
 <path d="M1657.700,252 Q1657.700,241.400 1668.500,241.400 Q1676.600,246.200 1685,241.400 Q1695.800,241.400 1695.800,252 V259 Q1695.800,265.900 1689,265.900 H1664.500 Q1657.700,265.900 1657.700,259 Z" fill="#444c55"/>
 <circle cx="1676.600" cy="255.400" r="6.500" fill="none" stroke="#4fd1ae" stroke-width="2.200" stroke-dasharray="5.200 1.600"/>
</g>
<!-- layers -->
<g stroke="#121212" stroke-width="1.200" stroke-linejoin="round">
 <path d="M2473.400,296.300 L2492,306.600 Q2494,308 2492,309.400 L2475.400,318.900 Q2473.400,319.900 2471.400,318.900 L2454.800,309.400 Q2452.800,308 2454.800,306.600 Z" fill="#d3d8db"/>
 <path d="M2473.400,289 L2492,299.300 Q2494,300.700 2492,302.100 L2475.400,311.600 Q2473.400,312.600 2471.400,311.600 L2454.800,302.100 Q2452.800,300.700 2454.800,299.300 Z" fill="#808486"/>
 <path d="M2471.400,282.800 Q2473.400,281.800 2475.400,282.800 L2492,292 Q2494,293.400 2492,294.800 L2475.400,304.300 Q2473.400,305.300 2471.400,304.300 L2454.800,294.800 Q2452.800,293.400 2454.800,292 Z" fill="#d3d8db"/>
</g>
<text x="2513.100" y="311.900" font-size="31" fill="#fff" stroke="#121212" stroke-width=".5" textLength="87.500" lengthAdjust="spacingAndGlyphs">Layers</text>
<!-- share -->
<rect x="2653" y="261" width="223.100" height="80.100" rx="15" fill="#50b2a1"/>
<rect x="2793.900" y="261" width="2.300" height="80.100" fill="#fff"/>
<text x="2683.800" y="312.200" font-size="32" fill="#fff" stroke="#50b2a1" stroke-width=".55" textLength="79" lengthAdjust="spacingAndGlyphs">Share</text>
<g transform="translate(2816.900,281.700) scale(1.600)" fill="none" stroke="#fff" stroke-width="2" stroke-linecap="round" stroke-linejoin="round">
 <path d="M10 13a5 5 0 0 0 7.540.540l3-3a5 5 0 0 0-7.070-7.070l-1.720 1.710"/>
 <path d="M14 11a5 5 0 0 0-7.540-.540l-3 3a5 5 0 0 0 7.070 7.070l1.710-1.710"/>
</g>
<!-- bottom-left fab -->
<circle cx="222" cy="1399.800" r="50" fill="#303030"/>
<g stroke="#5b8fb0" stroke-width="1.200" fill="none"><path d="M224.400,1394 L224.400,1385.500 M224.400,1394 L212.300,1399 M224.400,1394 L231.600,1400.800 M212.300,1399 L212,1408.500 M212.300,1403.700 H223.500"/></g>
<g fill="#d4d9dc"><circle cx="224.400" cy="1394" r="4.700"/><circle cx="224.400" cy="1385.200" r="2.600"/><circle cx="212.300" cy="1399" r="2.600"/><circle cx="231.600" cy="1400.800" r="2.600"/><circle cx="223.500" cy="1403.700" r="2.600"/><circle cx="212" cy="1408.500" r="2.600"/></g>
<!-- bottom toolbar -->
<rect x="1393" y="1242" width="255.100" height="192" rx="29" fill="#202020"/>
<path d="M1393,1337.800 V1271 Q1393,1242 1422,1242 H1489.100 V1337.800 Z" fill="#50b2a1"/>
<rect x="1489.100" y="1258.300" width="1.800" height="159.300" fill="#3c3c3c"/>
<path d="M1425.300,1273.300 L1457.300,1288.100 L1446.400,1293.300 L1440.700,1306.600 Z" fill="#fff" stroke="#fff" stroke-width="6.400" stroke-linejoin="round"/>
<path transform="translate(1418.300,1362) scale(1.900,2)" fill="#fff" d="M23 5.500V20c0 2.200-1.800 4-4 4h-7.300c-1.080 0-2.100-.430-2.850-1.190L1 14.830s1.260-1.230 1.300-1.250c.220-.190.490-.290.790-.290.220 0 .420.060.600.160.040.010 4.310 2.460 4.310 2.460V4c0-.830.670-1.500 1.500-1.500S11 3.170 11 4v7h1V1.500c0-.830.670-1.500 1.500-1.500S15 .670 15 1.500V11h1V2.500c0-.830.670-1.500 1.500-1.500s1.500.670 1.500 1.500V11h1V5.500c0-.830.670-1.500 1.500-1.500s1.500.670 1.500 1.500z"/>
<rect x="1526.200" y="1303.700" width="66.300" height="66.800" rx="17" fill="#d4d9dc"/>
<text x="1558.900" y="1358.600" font-size="63" font-weight="700" fill="#202020" text-anchor="middle">?</text>
<!-- zoom fab -->
<circle cx="2820" cy="1399.900" r="50.100" fill="#313131"/>
<path transform="translate(2796,1376) scale(2)" fill="#d4d9dc" d="M15.500 14h-.790l-.280-.270C15.410 12.590 16 11.110 16 9.500 16 5.910 13.090 3 9.500 3S3 5.910 3 9.500 5.910 16 9.500 16c1.610 0 3.090-.590 4.230-1.570l.270.280v.790l5 4.990L20.490 19l-4.990-5zm-6 0C7.010 14 5 11.990 5 9.500S7.010 5 9.500 5 14 7.010 14 9.500 11.990 14 9.500 14zM12 10h-2v2H9v-2H7V9h2V7h1v2h2v1z"/>
</svg>
<div class="abs" style="left:2088px;top:365.600px;width:800.400px;height:928.800px;border-radius:14px;background:#18272e;box-shadow:0 3px 14px 2px rgba(0,0,0,.55)"></div>
<svg class="abs" style="left:0;top:0" width="2904" height="1460" viewBox="0 0 2904 1460" font-family="Liberation Sans, sans-serif">
<defs><linearGradient id="phg" gradientUnits="userSpaceOnUse" x1="2088" y1="520" x2="2888" y2="340"><stop offset="0" stop-color="#2b343c"/><stop offset="1" stop-color="#414f57"/></linearGradient></defs>
<path d="M2088,493.900 V379.600 Q2088,365.600 2102,365.600 H2874.400 Q2888.400,365.600 2888.400,379.600 V493.900 Z" fill="url(#phg)"/>
<g fill="#e6eaec"><circle cx="2500" cy="380.100" r="4"/><circle cx="2512" cy="380.100" r="4"/><circle cx="2524" cy="380.100" r="4"/></g>
<path d="M2803.600,417.600 L2828.900,442.900 M2828.900,417.600 L2803.600,442.900" stroke="#fff" stroke-width="4" fill="none"/>
<!-- title card -->
<rect x="2120" y="526" width="736" height="118" fill="#1c2b34"/>
<g fill="#fff">
 <rect x="2160.100" y="569.900" width="17.900" height="7.900"/>
 <rect x="2148.900" y="592" width="11.200" height="7.900"/><rect x="2163.200" y="592" width="11.700" height="7.900"/><rect x="2178" y="592" width="11.200" height="7.900"/>
 <path d="M2167.700,580.200h2.800v5h3l-4.400,5.600l-4.400,-5.600h3z"/>
 <path d="M2162.200,580.400l2,2l-3.800,3.800l2.100,2.100l-6.800,1.400l1.400,-6.800l2.100,2.100z"/>
 <path d="M2176,580.400l-2,2l3.800,3.800l-2.100,2.100l6.800,1.400l-1.400,-6.800l-2.100,2.100z"/>
</g>
<text x="2210.400" y="597.100" font-size="28.800" fill="#d2d8dc" stroke="#1c2b34" stroke-width=".6" textLength="339.600" lengthAdjust="spacingAndGlyphs">SERVICE-LOADBALANCER</text>
<g fill="#d6dcdf">
 <rect x="2744.900" y="569.800" width="4.200" height="4"/><rect x="2751.900" y="569.800" width="7.400" height="4"/>
 <rect x="2744.900" y="576.500" width="4.200" height="4"/><rect x="2751.900" y="576.500" width="9.300" height="4"/>
 <rect x="2744.900" y="583.200" width="4.200" height="4"/><rect x="2751.900" y="583.200" width="7.400" height="4"/>
 <rect x="2744.900" y="590" width="4.200" height="4"/>
</g>
<path d="M2781,547.800 H2833 Q2841,547.800 2841,555.800 V613.900 Q2841,621.900 2833,621.900 H2781 Z" fill="#254248"/>
<g fill="#d6dcdf">
 <rect x="2794.700" y="564.800" width="4.300" height="4.300"/><rect x="2801.800" y="564.800" width="25.400" height="4.300"/>
 <rect x="2794.700" y="572" width="4.300" height="4.300"/><rect x="2801.800" y="572" width="25.400" height="4.300"/>
 <rect x="2794.700" y="579.200" width="4.300" height="4.300"/><rect x="2801.800" y="579.200" width="25.400" height="4.300"/>
 <rect x="2794.700" y="586.700" width="4.300" height="4.300"/><rect x="2801.800" y="586.700" width="25.400" height="4.300"/>
</g>
<!-- fields -->
<g font-size="33" fill="#fff" stroke="#fff" stroke-width=".55">
 <text x="2136.100" y="708.700" textLength="58.200" lengthAdjust="spacingAndGlyphs">Age</text>
 <text x="2136" y="838.200" textLength="60.900" lengthAdjust="spacingAndGlyphs">Kind</text>
 <text x="2309.400" y="838.200" textLength="148" lengthAdjust="spacingAndGlyphs">ApiVersion</text>
</g>
<g font-size="33" fill="#84929d" stroke="#84929d" stroke-width=".35">
 <text x="2136.600" y="764.400" textLength="103.400" lengthAdjust="spacingAndGlyphs">0 hours</text>
 <text x="2136" y="894.100" textLength="139.800" lengthAdjust="spacingAndGlyphs">Endpoints</text>
 <text x="2309.400" y="894.100" font-size="30" textLength="24.300" lengthAdjust="spacingAndGlyphs">v1</text>
</g>
<g font-size="31" fill="#fff" stroke="#18272e" stroke-width=".5">
 <text x="2136" y="967" textLength="165.700" lengthAdjust="spacingAndGlyphs">Namespace</text>
 <text x="2135.800" y="1025" textLength="96.200" lengthAdjust="spacingAndGlyphs" fill="#5fcdaa">default</text>
 <text x="2134" y="1101.900" textLength="92.400" lengthAdjust="spacingAndGlyphs">Labels</text>
 <text x="2136.800" y="1200.800" textLength="164" lengthAdjust="spacingAndGlyphs">Annotations</text>
</g>
<g font-size="28.300" fill="#fff" stroke="#18272e" stroke-width=".5">
 <text x="2738.800" y="1101.400" textLength="27.600" lengthAdjust="spacingAndGlyphs">(2)</text>
 <text x="2738.800" y="1199.700" textLength="27.600" lengthAdjust="spacingAndGlyphs">(2)</text>
</g>
<g fill="none" stroke="#fff" stroke-width="3.700">
 <path d="M2805.100,1085.400 L2816,1096.300 L2826.900,1085.400"/>
 <path d="M2805.100,1183.700 L2816,1194.600 L2826.900,1183.700"/>
</g>
<rect x="2136.300" y="1123" width="703.700" height="1.900" fill="#343f48"/>
<rect x="2136.300" y="1221.300" width="703.700" height="1.900" fill="#343f48"/>
<!-- action icons -->
<path transform="translate(2580.700,669.200) scale(1.730)" fill="#d4d9dc" d="M3 17.250V21h3.750L17.810 9.940l-3.750-3.750L3 17.250zM20.710 7.040c.390-.390.390-1.020 0-1.410l-2.340-2.340c-.390-.390-1.020-.390-1.410 0l-1.830 1.830 3.750 3.750 1.830-1.830z"/>
<!--SP2-->
<polygon points="2750.1,689.9 2750.8,689.1 2751.4,688.1 2751.8,687.1 2752.1,685.9 2752.1,684.8 2752.0,683.6 2751.8,682.3 2751.3,681.1 2750.6,680.0 2749.8,678.8 2748.8,677.8 2747.6,676.9 2746.2,676.0 2744.8,675.4 2743.1,674.8 2741.4,674.5 2748.3,669.7 2754.8,672.8 2755.8,674.3 2756.6,675.8 2757.2,677.4 2757.5,678.9 2757.7,680.4 2757.7,681.9 2757.5,683.2 2757.1,684.5 2756.6,685.7 2756.0,686.8 2755.2,687.7 2754.3,688.5 2753.3,689.1 2752.3,689.5 2751.2,689.8 2750.1,689.9" fill="#d4d9dc"/>
<polygon points="2750.1,689.9 2751.2,689.8 2752.3,689.5 2753.3,689.1 2754.3,688.5 2755.2,687.7 2756.0,686.8 2756.6,685.7 2757.1,684.5 2757.5,683.2 2757.7,681.9 2757.7,680.4 2757.5,678.9 2757.2,677.4 2756.6,675.8 2755.8,674.3 2754.8,672.8 2763.3,674.2 2765.5,681.2 2765.2,682.9 2764.6,684.6 2764.0,686.0 2763.1,687.4 2762.2,688.6 2761.2,689.6 2760.0,690.4 2758.9,691.1 2757.7,691.6 2756.4,691.8 2755.2,691.9 2754.1,691.9 2752.9,691.6 2751.9,691.2 2750.9,690.6 2750.1,689.9" fill="#d4d9dc"/>
<polygon points="2750.1,689.9 2750.9,690.6 2751.9,691.2 2752.9,691.6 2754.1,691.9 2755.2,691.9 2756.4,691.8 2757.7,691.6 2758.9,691.1 2760.0,690.4 2761.2,689.6 2762.2,688.6 2763.1,687.4 2764.0,686.0 2764.6,684.6 2765.2,682.9 2765.5,681.2 2770.3,688.1 2767.2,694.6 2765.7,695.6 2764.2,696.4 2762.6,697.0 2761.1,697.3 2759.6,697.5 2758.1,697.5 2756.8,697.3 2755.5,696.9 2754.3,696.4 2753.2,695.8 2752.3,695.0 2751.5,694.1 2750.9,693.1 2750.5,692.1 2750.2,691.0 2750.1,689.9" fill="#d4d9dc"/>
<polygon points="2750.1,689.9 2750.2,691.0 2750.5,692.1 2750.9,693.1 2751.5,694.1 2752.3,695.0 2753.2,695.8 2754.3,696.4 2755.5,696.9 2756.8,697.3 2758.1,697.5 2759.6,697.5 2761.1,697.3 2762.6,697.0 2764.2,696.4 2765.7,695.6 2767.2,694.6 2765.8,703.1 2758.8,705.3 2757.1,705.0 2755.4,704.4 2754.0,703.8 2752.6,702.9 2751.4,702.0 2750.4,701.0 2749.6,699.8 2748.9,698.7 2748.4,697.5 2748.2,696.2 2748.1,695.0 2748.1,693.9 2748.4,692.7 2748.8,691.7 2749.4,690.7 2750.1,689.9" fill="#d4d9dc"/>
<polygon points="2750.1,689.9 2749.4,690.7 2748.8,691.7 2748.4,692.7 2748.1,693.9 2748.1,695.0 2748.2,696.2 2748.4,697.5 2748.9,698.7 2749.6,699.8 2750.4,701.0 2751.4,702.0 2752.6,702.9 2754.0,703.8 2755.4,704.4 2757.1,705.0 2758.8,705.3 2751.9,710.1 2745.4,707.0 2744.4,705.5 2743.6,704.0 2743.0,702.4 2742.7,700.9 2742.5,699.4 2742.5,697.9 2742.7,696.6 2743.1,695.3 2743.6,694.1 2744.2,693.0 2745.0,692.1 2745.9,691.3 2746.9,690.7 2747.9,690.3 2749.0,690.0 2750.1,689.9" fill="#d4d9dc"/>
<polygon points="2750.1,689.9 2749.0,690.0 2747.9,690.3 2746.9,690.7 2745.9,691.3 2745.0,692.1 2744.2,693.0 2743.6,694.1 2743.1,695.3 2742.7,696.6 2742.5,697.9 2742.5,699.4 2742.7,700.9 2743.0,702.4 2743.6,704.0 2744.4,705.5 2745.4,707.0 2736.9,705.6 2734.7,698.6 2735.0,696.9 2735.6,695.2 2736.2,693.8 2737.1,692.4 2738.0,691.2 2739.0,690.2 2740.2,689.4 2741.3,688.7 2742.5,688.2 2743.8,688.0 2745.0,687.9 2746.1,687.9 2747.3,688.2 2748.3,688.6 2749.3,689.2 2750.1,689.9" fill="#d4d9dc"/>
<polygon points="2750.1,689.9 2749.3,689.2 2748.3,688.6 2747.3,688.2 2746.1,687.9 2745.0,687.9 2743.8,688.0 2742.5,688.2 2741.3,688.7 2740.2,689.4 2739.0,690.2 2738.0,691.2 2737.1,692.4 2736.2,693.8 2735.6,695.2 2735.0,696.9 2734.7,698.6 2729.9,691.7 2733.0,685.2 2734.5,684.2 2736.0,683.4 2737.6,682.8 2739.1,682.5 2740.6,682.3 2742.1,682.3 2743.4,682.5 2744.7,682.9 2745.9,683.4 2747.0,684.0 2747.9,684.8 2748.7,685.7 2749.3,686.7 2749.7,687.7 2750.0,688.8 2750.1,689.9" fill="#d4d9dc"/>
<polygon points="2750.1,689.9 2750.0,688.8 2749.7,687.7 2749.3,686.7 2748.7,685.7 2747.9,684.8 2747.0,684.0 2745.9,683.4 2744.7,682.9 2743.4,682.5 2742.1,682.3 2740.6,682.3 2739.1,682.5 2737.6,682.8 2736.0,683.4 2734.5,684.2 2733.0,685.2 2734.4,676.7 2741.4,674.5 2743.1,674.8 2744.8,675.4 2746.2,676.0 2747.6,676.9 2748.8,677.8 2749.8,678.8 2750.6,680.0 2751.3,681.1 2751.8,682.3 2752.0,683.6 2752.1,684.8 2752.1,685.9 2751.8,687.1 2751.4,688.1 2750.8,689.1 2750.1,689.9" fill="#d4d9dc"/>
<path d="M2751.4,689.5 2752.3,689.1 2753.1,688.6 2753.8,688.0 2754.4,687.2 2755.0,686.3 2755.4,685.4 2755.7,684.4 2755.9,683.3 2756.0,682.2 2756.0,681.0 2756.1,680.0 2756.1,679.0 2756.0,677.9 2755.9,676.8 2755.6,675.7 2755.3,674.6 2755.0,673.5 2754.9,672.5 2754.9,672.5 2756.7,674.1 2757.9,675.7 2758.8,677.3 2759.4,679.0 2759.8,680.6 2759.9,682.2 2759.9,683.7 2759.6,685.2 2759.1,686.3 2758.5,687.2 2757.7,688.1 2756.9,688.8 2756.1,689.4 2755.2,689.8 2754.3,690.1 2753.3,690.3 2752.4,690.4 2751.4,690.3ZM2751.3,690.6 2752.2,690.9 2753.1,691.1 2754.1,691.1 2755.1,691.0 2756.0,690.8 2757.0,690.5 2758.0,690.0 2758.9,689.3 2759.7,688.6 2760.5,687.8 2761.3,687.1 2762.1,686.4 2762.8,685.6 2763.5,684.7 2764.1,683.7 2764.6,682.7 2765.1,681.7 2765.8,681.0 2765.8,681.0 2765.9,683.4 2765.6,685.4 2765.1,687.2 2764.4,688.7 2763.5,690.2 2762.5,691.4 2761.4,692.4 2760.2,693.3 2759.0,693.7 2757.9,693.9 2756.8,694.0 2755.7,693.9 2754.7,693.7 2753.8,693.4 2752.9,693.0 2752.1,692.5 2751.4,691.8 2750.8,691.1ZM2750.5,691.2 2750.9,692.1 2751.4,692.9 2752.0,693.6 2752.8,694.2 2753.7,694.8 2754.6,695.2 2755.6,695.5 2756.7,695.7 2757.8,695.8 2759.0,695.8 2760.0,695.9 2761.0,695.9 2762.1,695.8 2763.2,695.7 2764.3,695.4 2765.4,695.1 2766.5,694.8 2767.5,694.7 2767.5,694.7 2765.9,696.5 2764.3,697.7 2762.7,698.6 2761.0,699.2 2759.4,699.6 2757.8,699.7 2756.3,699.7 2754.8,699.4 2753.7,698.9 2752.8,698.3 2751.9,697.5 2751.2,696.7 2750.6,695.9 2750.2,695.0 2749.9,694.1 2749.7,693.1 2749.6,692.2 2749.7,691.2ZM2749.4,691.1 2749.1,692.0 2748.9,692.9 2748.9,693.9 2749.0,694.9 2749.2,695.8 2749.5,696.8 2750.0,697.8 2750.7,698.7 2751.4,699.5 2752.2,700.3 2752.9,701.1 2753.6,701.9 2754.4,702.6 2755.3,703.3 2756.3,703.9 2757.3,704.4 2758.3,704.9 2759.0,705.6 2759.0,705.6 2756.6,705.7 2754.6,705.4 2752.8,704.9 2751.3,704.2 2749.8,703.3 2748.6,702.3 2747.6,701.2 2746.7,700.0 2746.3,698.8 2746.1,697.7 2746.0,696.6 2746.1,695.5 2746.3,694.5 2746.6,693.6 2747.0,692.7 2747.5,691.9 2748.2,691.2 2748.9,690.6ZM2748.8,690.3 2747.9,690.7 2747.1,691.2 2746.4,691.8 2745.8,692.6 2745.2,693.5 2744.8,694.4 2744.5,695.4 2744.3,696.5 2744.2,697.6 2744.2,698.8 2744.1,699.8 2744.1,700.8 2744.2,701.9 2744.3,703.0 2744.6,704.1 2744.9,705.2 2745.2,706.3 2745.3,707.3 2745.3,707.3 2743.5,705.7 2742.3,704.1 2741.4,702.5 2740.8,700.8 2740.4,699.2 2740.3,697.6 2740.3,696.1 2740.6,694.6 2741.1,693.5 2741.7,692.6 2742.5,691.7 2743.3,691.0 2744.1,690.4 2745.0,690.0 2745.9,689.7 2746.9,689.5 2747.8,689.4 2748.8,689.5ZM2748.9,689.2 2748.0,688.9 2747.1,688.7 2746.1,688.7 2745.1,688.8 2744.2,689.0 2743.2,689.3 2742.2,689.8 2741.3,690.5 2740.5,691.2 2739.7,692.0 2738.9,692.7 2738.1,693.4 2737.4,694.2 2736.7,695.1 2736.1,696.1 2735.6,697.1 2735.1,698.1 2734.4,698.8 2734.4,698.8 2734.3,696.4 2734.6,694.4 2735.1,692.6 2735.8,691.1 2736.7,689.6 2737.7,688.4 2738.8,687.4 2740.0,686.5 2741.2,686.1 2742.3,685.9 2743.4,685.8 2744.5,685.9 2745.5,686.1 2746.4,686.4 2747.3,686.8 2748.1,687.3 2748.8,688.0 2749.4,688.7ZM2749.7,688.6 2749.3,687.7 2748.8,686.9 2748.2,686.2 2747.4,685.6 2746.5,685.0 2745.6,684.6 2744.6,684.3 2743.5,684.1 2742.4,684.0 2741.2,684.0 2740.2,683.9 2739.2,683.9 2738.1,684.0 2737.0,684.1 2735.9,684.4 2734.8,684.7 2733.7,685.0 2732.7,685.1 2732.7,685.1 2734.3,683.3 2735.9,682.1 2737.5,681.2 2739.2,680.6 2740.8,680.2 2742.4,680.1 2743.9,680.1 2745.4,680.4 2746.5,680.9 2747.4,681.5 2748.3,682.3 2749.0,683.1 2749.6,683.9 2750.0,684.8 2750.3,685.7 2750.5,686.7 2750.6,687.6 2750.5,688.6ZM2750.8,688.7 2751.1,687.8 2751.3,686.9 2751.3,685.9 2751.2,684.9 2751.0,684.0 2750.7,683.0 2750.2,682.0 2749.5,681.1 2748.8,680.3 2748.0,679.5 2747.3,678.7 2746.6,677.9 2745.8,677.2 2744.9,676.5 2743.9,675.9 2742.9,675.4 2741.9,674.9 2741.2,674.2 2741.2,674.2 2743.6,674.1 2745.6,674.4 2747.4,674.9 2748.9,675.6 2750.4,676.5 2751.6,677.5 2752.6,678.6 2753.5,679.8 2753.9,681.0 2754.1,682.1 2754.2,683.2 2754.1,684.3 2753.9,685.3 2753.6,686.2 2753.2,687.1 2752.7,687.9 2752.0,688.6 2751.3,689.2Z" fill="#18272e"/>
<rect x="2748.2" y="688.0" width="3.8" height="3.8" fill="#18272e"/>
<!--/SP2-->
<g transform="translate(2810.200,674) scale(1.324)" fill="none" stroke="#d4d9dc" stroke-width="2.450" stroke-linejoin="round"><path d="M21 15v4a2 2 0 0 1-2 2H5a2 2 0 0 1-2-2v-4"/><path d="M7 10l5 5 5-5" stroke-linejoin="miter"/><path d="M12 15V1.800"/></g>
<!-- resize -->
<g stroke="#fff" stroke-width="2" fill="none"><path d="M2102.500,1271.500 L2126,1248.800 M2117,1248.300 H2126.500 V1257.800 M2102,1262 V1272 H2112"/></g>
<!-- feedback tab -->
<path d="M2904,663.500 H2856.200 Q2847.200,663.500 2847.200,672.500 V877 Q2847.200,886 2856.200,886 H2904 Z" fill="#52b5a3"/>
<text transform="translate(2897.800,844.800) rotate(-90)" font-size="32" fill="#fff" stroke="#52b5a3" stroke-width=".4" textLength="140.300" lengthAdjust="spacingAndGlyphs">Feedback</text>
<!-- window corners -->
<path d="M0,1460 V1437 A23,23 0 0 0 23,1460 Z" fill="#141414"/>
<path d="M.6,1400 V1437 A22.400,22.400 0 0 0 23,1459.400" fill="none" stroke="#5a6369" stroke-width="1.200" opacity=".8"/>
<path d="M2904,1460 V1437 A23,23 0 0 1 2881,1460 Z" fill="#141414"/>
<path d="M2903.400,1400 V1437 A22.400,22.400 0 0 1 2881,1459.400" fill="none" stroke="#5a5a5a" stroke-width="1.200" opacity=".7"/>
</svg>
</body>
</html>
